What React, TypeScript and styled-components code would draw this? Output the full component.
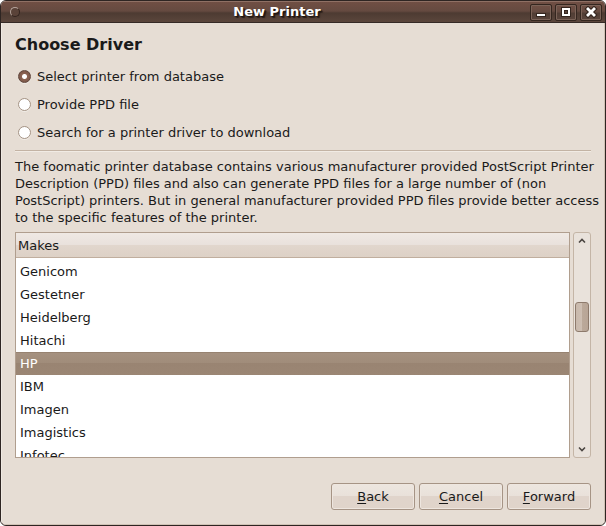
import React, { useState } from "react";
import styled, { createGlobalStyle } from "styled-components";

const GlobalStyle = createGlobalStyle`
  *, *::before, *::after { box-sizing: border-box; }
  body {
    margin: 0;
    background: #ffffff;
    color: #1a1a1a;
    font: 13px/17px "DejaVu Sans", sans-serif;
  }
  button, input { font: inherit; color: inherit; margin: 0; }
`;

const Window = styled.div`
  display: flex;
  flex-direction: column;
  height: 100vh;
  min-height: 420px;
  border: 1px solid #2e2522;
  border-radius: 6px;
  overflow: hidden;
  background: #e6ddd4;
`;

const TitleBar = styled.header`
  display: grid;
  grid-template-columns: auto 1fr auto;
  align-items: center;
  flex: none;
  height: 22px;
  padding: 0 3px 0 9px;
  border-top: 1px solid #8f7064;
  border-bottom: 1px solid #352a26;
  background: linear-gradient(#704f44 0, #654a40 45%, #4d3b32 55%, #5b463c 100%);
`;

const MenuDot = styled.button`
  width: 10px;
  height: 10px;
  padding: 0;
  border: 1px solid #33241f;
  border-top-color: #b5a49c;
  border-left-color: #b5a49c;
  border-radius: 50%;
  background: #5a4339;
`;

const Title = styled.h1`
  margin: 0;
  padding: 0 0 2px 4px;
  color: #ffffff;
  font-size: 13px;
  line-height: 17px;
  text-align: center;
  text-shadow: 1px 1px 1px #1c1411, 2px 2px 1px #2a1e19;
`;

const WindowControls = styled.div`
  display: flex;
  justify-content: flex-end;
  gap: 3px;
`;

const ControlButton = styled.button`
  display: flex;
  width: 22px;
  height: 17px;
  padding: 0;
  border: 1px solid #34261f;
  border-radius: 2px;
  background: linear-gradient(#715146 0, #664b41 45%, #513e35 55%, #5a453c 100%);
  box-shadow: inset 0 0 0 1px #7b6358;
  svg { display: block; margin: auto; }
`;

const Content = styled.main`
  display: flex;
  flex: 1;
  flex-direction: column;
  min-height: 0;
  padding: 12px 14px 14px;
  border-bottom: 1px solid #cfc2b5;
  box-shadow: inset 1px 0 #efe9e2, inset -1px 0 #cfc2b5;
`;

const Heading = styled.h2`
  margin: 0 0 7px;
  font-size: 16px;
  line-height: 20px;
`;

const Choices = styled.div`
  display: flex;
  flex-direction: column;
`;

const Choice = styled.label`
  display: flex;
  align-items: center;
  gap: 6px;
  height: 28px;
  padding-left: 3px;
`;

const Radio = styled.input`
  appearance: none;
  width: 13px;
  height: 13px;
  border: 1px solid #a49283;
  border-radius: 50%;
  background: #ffffff;
  box-shadow: 0 1px #f1ece6;
  &:checked {
    border-color: #60463c;
    background: radial-gradient(circle, #ffffff 0 2px, #8b6251 3px, #805a4b 5px);
  }
`;

const Divider = styled.hr`
  flex: none;
  width: 100%;
  height: 2px;
  margin: 4px 0 6px;
  border: 0;
  border-top: 1px solid #c3b3a4;
  border-bottom: 1px solid #f1ebe4;
`;

const Description = styled.p`
  margin: 0 0 6px;
  white-space: pre;
`;

const ListArea = styled.section`
  display: flex;
  flex: 1;
  gap: 3px;
  min-height: 0;
`;

const ListFrame = styled.div`
  flex: 1;
  min-width: 0;
  overflow: hidden;
  border: 1px solid #b09e8e;
  background: #ffffff;
`;

const MakesTable = styled.table`
  width: 100%;
  border-collapse: separate;
  border-spacing: 0;
  tbody::before { content: ""; display: block; height: 2px; }
`;

const HeaderCell = styled.th`
  height: 25px;
  padding: 0 2px;
  border-bottom: 1px solid #c0ae9e;
  background: linear-gradient(#efe9e4 0, #e9e1dc 48%, #e1d6cd 50%, #ddd1c6 100%);
  font-weight: 400;
  text-align: left;
`;

const MakeCell = styled.td<{ $selected: boolean }>`
  height: 23px;
  padding: 0 4px;
  color: ${(p) => (p.$selected ? "#ffffff" : "inherit")};
  background: ${(p) =>
    p.$selected ? "linear-gradient(#978371 0 1px, #a59180 1px, #a08c7a 48%, #998472 50%, #9b8674 100%)" : "transparent"};
  cursor: default;
`;

const ScrollBar = styled.div`
  display: grid;
  grid-template-rows: 16px 1fr 16px;
  flex: none;
  width: 18px;
  border: 1px solid #c4b5a6;
  border-radius: 3px;
  background: #e9e2db;
`;

const ScrollButton = styled.button`
  display: flex;
  padding: 0;
  border: 0;
  background: transparent;
  svg { margin: auto; }
`;

const Track = styled.div`
  display: grid;
  grid-template-rows: 53fr 30px 109fr;
  padding: 0 1px;
`;

const Thumb = styled.div`
  grid-row: 2;
  border: 1px solid #8d7a6c;
  border-radius: 3px;
  background: linear-gradient(90deg, #c9b9ac 0, #cdbeb2 48%, #bba99a 52%, #b8a596 100%);
`;

const Actions = styled.footer`
  display: flex;
  flex: none;
  justify-content: flex-end;
  gap: 4px;
  margin-top: 25px;
`;

const ActionButton = styled.button`
  width: 84px;
  height: 27px;
  padding: 0;
  border: 1px solid #a69485;
  border-radius: 3px;
  background: linear-gradient(#ede6df 0, #e9e1da 47%, #e0d4cb 50%, #e0d4ca 100%);
  box-shadow: inset 0 0 0 1px #eee6df;
`;

const Mnemonic = styled.span`
  text-decoration: underline;
  text-underline-offset: 2px;
`;

const description = [
  "The foomatic printer database contains various manufacturer provided PostScript Printer",
  "Description (PPD) files and also can generate PPD files for a large number of (non",
  "PostScript) printers. But in general manufacturer provided PPD files provide better access",
  "to the specific features of the printer.",
].join("\n");

const choices = [
  "Select printer from database",
  "Provide PPD file",
  "Search for a printer driver to download",
];

const makes = ["Genicom", "Gestetner", "Heidelberg", "Hitachi", "HP", "IBM", "Imagen", "Imagistics", "Infotec"];

const actions = ["Back", "Cancel", "Forward"];

export default function App() {
  const [choice, setChoice] = useState(0);
  const [make, setMake] = useState("HP");

  return (
    <>
      <GlobalStyle />
      <Window>
        <TitleBar>
          <MenuDot aria-label="Window menu" />
          <Title>New Printer</Title>
          <WindowControls>
            <ControlButton aria-label="Minimize">
              <svg width="16" height="13" shapeRendering="crispEdges">
                <path d="M3 7h10v4H3z" fill="#34261f" />
                <path d="M4 8h8v2H4z" fill="#fff" />
              </svg>
            </ControlButton>
            <ControlButton aria-label="Maximize">
              <svg width="16" height="13" shapeRendering="crispEdges">
                <path d="M3 1h10v10H3z" fill="#34261f" />
                <path fillRule="evenodd" d="M4 2h8v8H4zM6 4v4h4V4z" fill="#fff" />
                <path d="M7 5h2v2H7z" fill="#5c463c" />
              </svg>
            </ControlButton>
            <ControlButton aria-label="Close">
              <svg width="16" height="13">
                <path d="M5 3l6 6M11 3l-6 6" stroke="#34261f" strokeWidth="5" strokeLinecap="square" />
                <path d="M5 3l6 6M11 3l-6 6" stroke="#fff" strokeWidth="2.8" strokeLinecap="square" />
              </svg>
            </ControlButton>
          </WindowControls>
        </TitleBar>

        <Content>
          <Heading>Choose Driver</Heading>
          <Choices role="radiogroup" aria-label="Driver source">
            {choices.map((text, i) => (
              <Choice key={text}>
                <Radio type="radio" name="source" checked={choice === i} onChange={() => setChoice(i)} />
                {text}
              </Choice>
            ))}
          </Choices>
          <Divider />
          <Description>{description}</Description>

          <ListArea>
            <ListFrame>
              <MakesTable>
                <thead>
                  <tr>
                    <HeaderCell scope="col">Makes</HeaderCell>
                  </tr>
                </thead>
                <tbody>
                  {makes.map((name) => (
                    <tr key={name} aria-selected={make === name} onClick={() => setMake(name)}>
                      <MakeCell $selected={make === name}>{name}</MakeCell>
                    </tr>
                  ))}
                </tbody>
              </MakesTable>
            </ListFrame>
            <ScrollBar>
              <ScrollButton aria-label="Scroll up">
                <svg width="8" height="6">
                  <path d="M1 4.5L4 1.5L7 4.5" fill="none" stroke="#4a4541" strokeWidth="1.6" />
                </svg>
              </ScrollButton>
              <Track>
                <Thumb />
              </Track>
              <ScrollButton aria-label="Scroll down">
                <svg width="8" height="6">
                  <path d="M1 1.5L4 4.5L7 1.5" fill="none" stroke="#4a4541" strokeWidth="1.6" />
                </svg>
              </ScrollButton>
            </ScrollBar>
          </ListArea>

          <Actions>
            {actions.map((text) => (
              <ActionButton key={text} type="button">
                <Mnemonic>{text[0]}</Mnemonic>
                {text.slice(1)}
              </ActionButton>
            ))}
          </Actions>
        </Content>
      </Window>
    </>
  );
}
